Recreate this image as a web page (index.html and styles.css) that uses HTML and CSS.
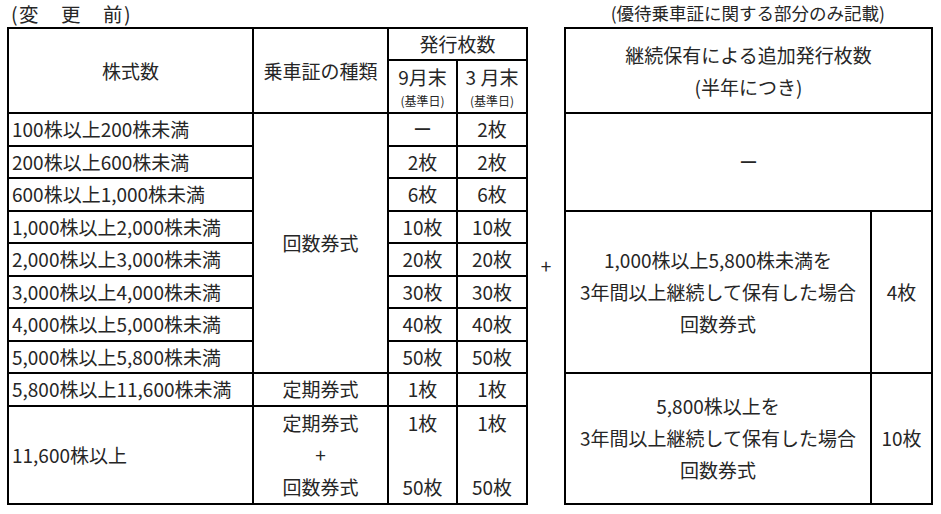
FILE: index.html
```html
<!DOCTYPE html>
<html lang="ja">
<head>
<meta charset="utf-8">
<title>優待乗車証</title>
<link rel="stylesheet" href="styles.css">
</head>
<body>
<div class="page">
  <div class="caption">
    <span class="title">(変　更　前)</span>
    <span class="note">(優待乗車証に関する部分のみ記載)</span>
  </div>
  <table class="grid">
    <colgroup>
      <col class="c-shares"><col class="c-type"><col class="c-sep"><col class="c-mar"><col class="c-plus"><col class="c-add"><col class="c-addn">
    </colgroup>
    <tr class="h1">
      <td rowspan="2">株式数</td>
      <td rowspan="2">乗車証の種類</td>
      <td colspan="2">発行枚数</td>
      <td rowspan="12" class="plus">+</td>
      <td rowspan="2" colspan="2" class="lh">継続保有による追加発行枚数<br>(半年につき)</td>
    </tr>
    <tr class="h2">
      <td><div class="mon">9月末</div><div class="base">(基準日)</div></td>
      <td><div class="mon">3 月末</div><div class="base">(基準日)</div></td>
    </tr>
    <tr class="r">
      <td class="left">100株以上200株未満</td>
      <td rowspan="8">回数券式</td>
      <td>ー</td><td>2枚</td>
      <td rowspan="3" colspan="2">ー</td>
    </tr>
    <tr class="r"><td class="left">200株以上600株未満</td><td>2枚</td><td>2枚</td></tr>
    <tr class="r"><td class="left">600株以上1,000株未満</td><td>6枚</td><td>6枚</td></tr>
    <tr class="r">
      <td class="left">1,000株以上2,000株未満</td><td>10枚</td><td>10枚</td>
      <td rowspan="5" class="lh">1,000株以上5,800株未満を<br>3年間以上継続して保有した場合<br>回数券式</td>
      <td rowspan="5">4枚</td>
    </tr>
    <tr class="r"><td class="left">2,000株以上3,000株未満</td><td>20枚</td><td>20枚</td></tr>
    <tr class="r"><td class="left">3,000株以上4,000株未満</td><td>30枚</td><td>30枚</td></tr>
    <tr class="r"><td class="left">4,000株以上5,000株未満</td><td>40枚</td><td>40枚</td></tr>
    <tr class="r"><td class="left">5,000株以上5,800株未満</td><td>50枚</td><td>50枚</td></tr>
    <tr class="r">
      <td class="left">5,800株以上11,600株未満</td><td>定期券式</td><td>1枚</td><td>1枚</td>
      <td rowspan="2" class="lh">5,800株以上を<br>3年間以上継続して保有した場合<br>回数券式</td>
      <td rowspan="2">10枚</td>
    </tr>
    <tr class="last">
      <td class="left">11,600株以上</td>
      <td><div class="ln">定期券式</div><div class="ln">+</div><div class="ln">回数券式</div></td>
      <td><div class="ln">1枚</div><div class="ln"></div><div class="ln">50枚</div></td>
      <td><div class="ln">1枚</div><div class="ln"></div><div class="ln">50枚</div></td>
    </tr>
  </table>
</div>
</body>
</html>
```
FILE: styles.css
```css
html, body {
  margin: 0;
  padding: 0;
  background: #ffffff;
}
body {
  font-family: "Noto Sans CJK JP", "Noto Sans", sans-serif;
  color: #262626;
}
.page {
  padding-left: 7px;
  width: 924px;
}
.caption {
  height: 27px;
  display: flex;
  justify-content: space-between;
  align-items: center;
}
.title {
  font-size: 19.5px;
  letter-spacing: 1.5px;
  line-height: 27px;
  margin-left: 4px;
}
.note {
  font-size: 17.5px;
  line-height: 27px;
  margin-right: 46px;
  margin-top: -2px;
}
.grid {
  border-collapse: collapse;
  table-layout: fixed;
  width: 924px;
  font-size: 19px;
}
.c-shares { width: 245px; }
.c-type { width: 135px; }
.c-sep { width: 69px; }
.c-mar { width: 70px; }
.c-plus { width: 38px; }
.c-add { width: 306px; }
.c-addn { width: 61px; }
.grid td {
  border: 2px solid #000;
  text-align: center;
  vertical-align: middle;
  padding: 0 3px;
  line-height: 26px;
  white-space: nowrap;
}
.grid td.left {
  text-align: left;
}
.grid td.plus {
  border-top: none;
  border-bottom: none;
}
.grid td.lh {
  line-height: 32px;
}
.h1 { height: 32px; }
.h2 { height: 53px; }
.r { height: 32.5px; }
.last { height: 96px; }
.mon {
  line-height: 26px;
  padding-top: 2px;
}
.base {
  font-size: 12px;
  line-height: 22px;
}
.ln {
  height: 32px;
  line-height: 32px;
}
```
